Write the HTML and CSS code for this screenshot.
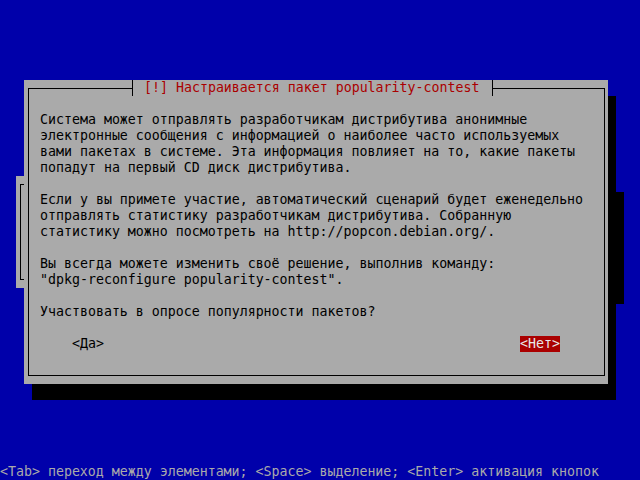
FILE: index.html
```html
<!DOCTYPE html>
<html>

<head>
    <meta charset="utf-8">
    <title>popularity-contest</title>
    <link rel="stylesheet" href="styles.css">
</head>

<body>
    <div class="screen">
        <div class="window back">
            <div class="frame"></div>
        </div>

        <div class="window dialog">
            <div class="frame">
                <div class="title">[!] Настраивается пакет popularity-contest</div>
                <p>Система может отправлять разработчикам дистрибутива анонимные
электронные сообщения с информацией о наиболее часто используемых
вами пакетах в системе. Эта информация повлияет на то, какие пакеты
попадут на первый CD диск дистрибутива.</p>
                <p>Если у вы примете участие, автоматический сценарий будет еженедельно
отправлять статистику разработчикам дистрибутива. Собранную
статистику можно посмотреть на http://popcon.debian.org/.</p>
                <p>Вы всегда можете изменить своё решение, выполнив команду:
"dpkg-reconfigure popularity-contest".</p>
                <p>Участвовать в опросе популярности пакетов?</p>
                <div class="buttons">
                    <span class="btn">&lt;Да&gt;</span>
                    <span class="btn active">&lt;Нет&gt;</span>
                </div>
            </div>
        </div>

        <div class="help">&lt;Tab&gt; переход между элементами; &lt;Space&gt; выделение; &lt;Enter&gt; активация кнопок</div>
    </div>
</body>

</html>
```

FILE: styles.css
```css
html,
body {
    margin: 0;
    padding: 0;
    background: #0000aa;
}

.screen {
    display: grid;
    grid-template-columns: repeat(80, 8px);
    grid-template-rows: repeat(30, 16px);
    width: 640px;
    height: 480px;
    overflow: hidden;
    font-family: "DejaVu Sans Mono", monospace;
    font-size: 13.288px;
    line-height: 16px;
    color: #000;
}

/* windows stack in document order */
.window {
    position: relative;
    z-index: 0;
    display: flex;
    background: #aaaaaa;
    box-shadow: 8px 16px 0 0 #000;
}

.window .frame {
    flex: 1;
    position: relative;
    margin: 8px 3px 8px 4px;
    border: 1px solid #000;
}

.back {
    grid-column: 3 / 78;
    grid-row: 12 / 19;
}

.dialog {
    grid-column: 4 / 77;
    grid-row: 6 / 25;
}

.dialog .frame {
    padding: 23px 0 0 11px;
}

.title {
    position: absolute;
    top: -9px;
    left: 103px;
    width: 348px;
    height: 16px;
    padding-left: 11px;
    border-left: 1px solid #000;
    border-right: 1px solid #000;
    background: #aaaaaa;
    color: #aa0000;
    white-space: pre;
}

.dialog p {
    margin: 0 0 16px;
    white-space: pre;
}

.buttons {
    display: flex;
    justify-content: space-between;
    padding: 0 44px 0 32px;
}

.btn {
    white-space: pre;
}

.btn.active {
    background: #aa0000;
    color: #e8e8e8;
}

.help {
    grid-column: 1 / -1;
    grid-row: 30;
    color: #aaaaaa;
    white-space: pre;
}
```
